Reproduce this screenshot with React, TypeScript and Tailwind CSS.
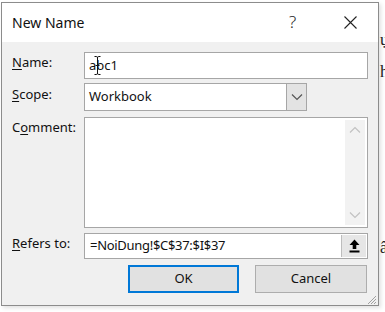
import React from "react";

const font = { fontFamily: '"Noto Sans", "Segoe UI", sans-serif' };

function Chevron({ dir, color }: { dir: "up" | "down"; color: string }) {
  return (
    <svg width="12" height="8" viewBox="0 0 12 8">
      {dir === "down" ? (
        <path d="M1 1.5 L6 6.5 L11 1.5" fill="none" stroke={color} strokeWidth="1.2" />
      ) : (
        <path d="M1 6.5 L6 1.5 L11 6.5" fill="none" stroke={color} strokeWidth="1.2" />
      )}
    </svg>
  );
}

function Label({ children, u, rest }: { children?: React.ReactNode; u: string; rest: string }) {
  return (
    <div className="text-[13px] leading-[20px] text-[#111] whitespace-nowrap">
      <span className="underline underline-offset-[2px] decoration-1">{u}</span>
      {rest}
      {children}
    </div>
  );
}

export default function App() {
  return (
    <div className="w-[385px] h-[312px] bg-white overflow-hidden flex" style={font}>
      <div className="w-[1px] shrink-0" />
      <div className="pt-[2px] shrink-0">
        <div className="w-[378px] h-[304px] border border-[#8c8c8c] bg-[#f0f0f0] flex flex-col shadow-[2px_2px_4px_rgba(0,0,0,0.12)]">
          {/* Title bar */}
          <div className="h-[39px] bg-white flex items-center shrink-0">
            <div className="pl-[10px] text-[14px] text-[#111] flex-1 pb-[1px]">New Name</div>
            <div className="w-[12px] text-[17px] leading-[20px] font-light text-[#222] mr-[43px] pb-[1px]">?</div>
            <div className="mr-[21px]">
              <svg width="13" height="13" viewBox="0 0 13 13">
                <path d="M0.5 0.5 L12.5 12.5 M12.5 0.5 L0.5 12.5" stroke="#222" strokeWidth="1.1" />
              </svg>
            </div>
          </div>
          {/* Body */}
          <div className="flex-1 pt-[10px] pl-[10px] pr-[9px] flex flex-col">
            {/* Name */}
            <div className="flex items-start">
              <div className="w-[72px] pt-0">
                <Label u="N" rest="ame:" />
              </div>
              <div className="relative w-[284px] h-[27px] bg-white border border-[#a6a6a6] flex items-center pl-[4px] text-[13px] text-[#111]">
                abc1
                <svg className="absolute left-[9px] top-[3px]" width="7" height="19" viewBox="0 0 7 19">
                  <path d="M0.5 0.5 H2.5 Q3.5 0.5 3.5 2 V17 Q3.5 18.5 2.5 18.5 H0.5 M6.5 0.5 H4.5 Q3.5 0.5 3.5 2 M3.5 17 Q3.5 18.5 4.5 18.5 H6.5 M1.5 9.5 H5.5" fill="none" stroke="#111" strokeWidth="1" />
                </svg>
              </div>
            </div>
            {/* Scope */}
            <div className="flex items-start mt-[4px]">
              <div className="w-[72px] pt-[1px]">
                <Label u="S" rest="cope:" />
              </div>
              <div className="w-[223px] h-[28px] bg-white border border-[#a6a6a6] flex">
                <div className="flex-1 flex items-center pl-[4px] text-[13px] text-[#111]">Workbook</div>
                <div className="w-[20px] bg-[#e3e3e3] border-l border-[#a6a6a6] flex items-center justify-center">
                  <Chevron dir="down" color="#555" />
                </div>
              </div>
            </div>
            {/* Comment */}
            <div className="flex items-start mt-[6px]">
              <div className="w-[72px] pt-0">
                <Label u="" rest="C">
                  <span className="underline underline-offset-[2px] decoration-1">o</span>mment:
                </Label>
              </div>
              <div className="w-[284px] h-[111px] bg-white border border-[#a6a6a6] flex justify-end pr-[2px] py-[2px]">
                <div className="w-[20px] bg-[#f2f2f2] flex flex-col items-center justify-between py-[6px]">
                  <Chevron dir="up" color="#c2c2c2" />
                  <Chevron dir="down" color="#c2c2c2" />
                </div>
              </div>
            </div>
            {/* Refers to */}
            <div className="flex items-start mt-[5px]">
              <div className="w-[72px] pt-0">
                <Label u="R" rest="efers to:" />
              </div>
              <div className="w-[284px] h-[26px] bg-white border border-[#a6a6a6] flex">
                <div className="flex-1 flex items-center pl-[5px] text-[13px] tracking-[-0.3px] text-[#111] whitespace-nowrap">=NoiDung!$C$37:$I$37</div>
                <div className="w-[25px] bg-[#e6e6e6] border-l border-[#bdbdbd] m-[1px] ml-0 flex items-center justify-center">
                  <svg width="11" height="14" viewBox="0 0 11 14">
                    <path d="M5.5 0.5 L10.5 6 H7.3 V10 H3.7 V6 H0.5 Z" fill="#000" />
                    <rect x="0.5" y="11.5" width="10" height="2" fill="#000" />
                  </svg>
                </div>
              </div>
            </div>
            {/* Buttons */}
            <div className="flex mt-[6px] pl-[116px] gap-[16px]">
              <div className="w-[111px] h-[28px] bg-[#e1e1e1] border-2 border-[#0078d7] flex items-center justify-center text-[13px] text-[#111]">
                OK
              </div>
              <div className="w-[112px] h-[28px] bg-[#e1e1e1] border border-[#adadad] flex items-center justify-center text-[13px] text-[#111]">
                Cancel
              </div>
            </div>
            <div className="flex-1 flex justify-end items-end pr-0">
              <svg width="10" height="10" viewBox="0 0 10 10" className="-mr-[8px] mb-[0px]">
                <path d="M9 1 L1 9 M9 4 L4 9 M9 7 L7 9" stroke="#a0a0a0" strokeWidth="1" />
              </svg>
            </div>
          </div>
        </div>
      </div>
      {/* Background document slivers */}
      <div className="flex-1 overflow-hidden text-[#222] text-[17px] leading-[20px] pl-[1px]" style={{ fontFamily: '"Liberation Serif", serif' }}>
        <div className="mt-[30px]">ụ</div>
        <div className="mt-[12px]">h</div>
        <div className="mt-[156px]">â</div>
      </div>
    </div>
  );
}
